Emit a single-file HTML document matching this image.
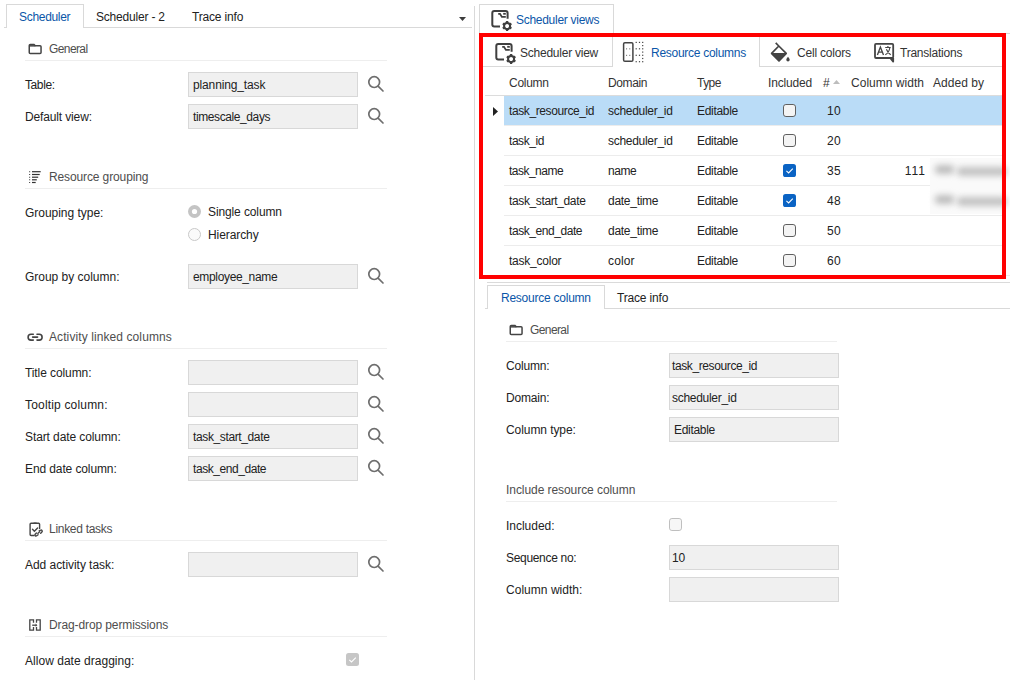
<!DOCTYPE html>
<html><head><meta charset="utf-8"><style>
html,body{margin:0;padding:0;background:#fff;}
body{width:1010px;height:680px;position:relative;overflow:hidden;font-family:"Liberation Sans",sans-serif;}
.t{position:absolute;white-space:nowrap;font-size:12px;line-height:14px;letter-spacing:-0.25px;}
.b{position:absolute;display:block;}
</style></head><body>
<div class="b" style="left:4px;top:27px;width:468px;height:1px;background:#d9d9d9"></div>
<div class="b" style="left:6px;top:4px;width:78px;height:24px;background:#fff;box-sizing:border-box;border:1px solid #d9d9d9;border-bottom:none"></div>
<div class="t " style="left:19px;top:10px;color:#0b56a8;letter-spacing:-0.305px;">Scheduler</div>
<div class="t " style="left:96px;top:10px;color:#222222;letter-spacing:-0.198px;">Scheduler - 2</div>
<div class="t " style="left:192px;top:10px;color:#222222;letter-spacing:-0.179px;">Trace info</div>
<svg class="b" style="left:458px;top:16px" width="9" height="6" viewBox="0 0 9 6"><path d="M1 1 H8 L4.5 5 Z" fill="#3c3c3c"/></svg>
<div class="b" style="left:474px;top:6px;width:1px;height:674px;background:#d9d9d9"></div>
<svg class="b" style="left:24px;top:38px" width="22" height="22" viewBox="0 0 22 22"><path d="M5.25 14.45 V7.55 a1 1 0 0 1 1 -1 H10 L11.3 7.85 H16.05 a1 1 0 0 1 1 1 V14.45 a1 1 0 0 1 -1 1 H6.25 a1 1 0 0 1 -1 -1 Z" fill="none" stroke="#444" stroke-width="1.5"/><path d="M5.25 7.85 H11.3" stroke="#444" stroke-width="1.5"/></svg>
<div class="t " style="left:49px;top:42px;color:#4e4e4e;letter-spacing:-0.598px;">General</div>
<div class="b" style="left:25px;top:60px;width:362px;height:1px;background:#eeeeee"></div>
<div class="t " style="left:25px;top:78px;color:#222222;letter-spacing:-0.404px;">Table:</div>
<div class="b" style="left:188px;top:72px;width:170px;height:25px;background:#f0f0f0;box-sizing:border-box;border:1px solid #d8d8d8"></div>
<div class="t " style="left:193px;top:78px;color:#222;letter-spacing:-0.132px;">planning_task</div>
<svg class="b" style="left:364px;top:74px" width="24" height="24" viewBox="0 0 24 24"><g fill="none" stroke="#6e6e6e" stroke-width="1.7" stroke-linecap="round"><circle cx="10.2" cy="8.1" r="5.4"/><path d="M14.3 12.3 L19 17"/></g></svg>
<div class="t " style="left:25px;top:110px;color:#222222;letter-spacing:-0.142px;">Default view:</div>
<div class="b" style="left:188px;top:104px;width:170px;height:25px;background:#f0f0f0;box-sizing:border-box;border:1px solid #d8d8d8"></div>
<div class="t " style="left:193px;top:110px;color:#222;letter-spacing:-0.401px;">timescale_days</div>
<svg class="b" style="left:364px;top:106px" width="24" height="24" viewBox="0 0 24 24"><g fill="none" stroke="#6e6e6e" stroke-width="1.7" stroke-linecap="round"><circle cx="10.2" cy="8.1" r="5.4"/><path d="M14.3 12.3 L19 17"/></g></svg>
<svg class="b" style="left:24px;top:166px" width="22" height="22" viewBox="0 0 22 22"><path d="M5 5.7 H6.2" stroke="#555" stroke-width="1.1"/><path d="M8 5.7 H16.7" stroke="#333" stroke-width="1.2"/><path d="M5 8.5 H6.2" stroke="#555" stroke-width="1.1"/><path d="M8 8.5 H15.7" stroke="#333" stroke-width="1.2"/><path d="M5 11.2 H6.2" stroke="#555" stroke-width="1.1"/><path d="M8 11.2 H14.2" stroke="#333" stroke-width="1.2"/><path d="M5 13.8 H6.2" stroke="#555" stroke-width="1.1"/><path d="M8 13.8 H12.8" stroke="#333" stroke-width="1.2"/><path d="M5 16.5 H6.2" stroke="#555" stroke-width="1.1"/><path d="M8 16.5 H11.7" stroke="#333" stroke-width="1.2"/></svg>
<div class="t " style="left:49px;top:170px;color:#4e4e4e;letter-spacing:-0.119px;">Resource grouping</div>
<div class="b" style="left:25px;top:188px;width:362px;height:1px;background:#eeeeee"></div>
<div class="t " style="left:25px;top:206px;color:#222222;letter-spacing:-0.025px;">Grouping type:</div>
<svg class="b" style="left:188px;top:205px" width="13" height="13" viewBox="0 0 13 13"><circle cx="6.5" cy="6.5" r="6.5" fill="#c4c4c4"/><circle cx="6.5" cy="6.5" r="2.6" fill="#fff"/></svg>
<div class="t " style="left:208px;top:205px;color:#222222;letter-spacing:-0.115px;">Single column</div>
<svg class="b" style="left:188px;top:228px" width="13" height="13" viewBox="0 0 13 13"><circle cx="6.5" cy="6.5" r="6" fill="#fafafa" stroke="#c8c8c8" stroke-width="1"/></svg>
<div class="t " style="left:208px;top:228px;color:#222222;letter-spacing:-0.081px;">Hierarchy</div>
<div class="t " style="left:25px;top:270px;color:#222222;letter-spacing:-0.014px;">Group by column:</div>
<div class="b" style="left:188px;top:264px;width:170px;height:25px;background:#f0f0f0;box-sizing:border-box;border:1px solid #d8d8d8"></div>
<div class="t " style="left:193px;top:270px;color:#222;letter-spacing:-0.343px;">employee_name</div>
<svg class="b" style="left:364px;top:266px" width="24" height="24" viewBox="0 0 24 24"><g fill="none" stroke="#6e6e6e" stroke-width="1.7" stroke-linecap="round"><circle cx="10.2" cy="8.1" r="5.4"/><path d="M14.3 12.3 L19 17"/></g></svg>
<svg class="b" style="left:24px;top:326px" width="22" height="22" viewBox="0 0 22 22"><g fill="none" stroke="#444" stroke-width="1.6" stroke-linecap="round"><path d="M9.3 8.3 H7 a2.9 2.9 0 0 0 0 5.8 H9.3"/><path d="M13 8.3 H15.2 a2.9 2.9 0 0 1 0 5.8 H13"/><path d="M8.6 11.1 H13.6"/></g></svg>
<div class="t " style="left:49px;top:330px;color:#4e4e4e;letter-spacing:0.093px;">Activity linked columns</div>
<div class="b" style="left:25px;top:348px;width:362px;height:1px;background:#eeeeee"></div>
<div class="t " style="left:25px;top:366px;color:#222222;letter-spacing:-0.090px;">Title column:</div>
<div class="b" style="left:188px;top:360px;width:170px;height:25px;background:#f0f0f0;box-sizing:border-box;border:1px solid #d8d8d8"></div>
<svg class="b" style="left:364px;top:362px" width="24" height="24" viewBox="0 0 24 24"><g fill="none" stroke="#6e6e6e" stroke-width="1.7" stroke-linecap="round"><circle cx="10.2" cy="8.1" r="5.4"/><path d="M14.3 12.3 L19 17"/></g></svg>
<div class="t " style="left:25px;top:398px;color:#222222;letter-spacing:0.176px;">Tooltip column:</div>
<div class="b" style="left:188px;top:392px;width:170px;height:25px;background:#f0f0f0;box-sizing:border-box;border:1px solid #d8d8d8"></div>
<svg class="b" style="left:364px;top:394px" width="24" height="24" viewBox="0 0 24 24"><g fill="none" stroke="#6e6e6e" stroke-width="1.7" stroke-linecap="round"><circle cx="10.2" cy="8.1" r="5.4"/><path d="M14.3 12.3 L19 17"/></g></svg>
<div class="t " style="left:25px;top:430px;color:#222222;letter-spacing:-0.096px;">Start date column:</div>
<div class="b" style="left:188px;top:424px;width:170px;height:25px;background:#f0f0f0;box-sizing:border-box;border:1px solid #d8d8d8"></div>
<div class="t " style="left:193px;top:430px;color:#222;letter-spacing:-0.375px;">task_start_date</div>
<svg class="b" style="left:364px;top:426px" width="24" height="24" viewBox="0 0 24 24"><g fill="none" stroke="#6e6e6e" stroke-width="1.7" stroke-linecap="round"><circle cx="10.2" cy="8.1" r="5.4"/><path d="M14.3 12.3 L19 17"/></g></svg>
<div class="t " style="left:25px;top:462px;color:#222222;letter-spacing:-0.109px;">End date column:</div>
<div class="b" style="left:188px;top:456px;width:170px;height:25px;background:#f0f0f0;box-sizing:border-box;border:1px solid #d8d8d8"></div>
<div class="t " style="left:193px;top:462px;color:#222;letter-spacing:-0.436px;">task_end_date</div>
<svg class="b" style="left:364px;top:458px" width="24" height="24" viewBox="0 0 24 24"><g fill="none" stroke="#6e6e6e" stroke-width="1.7" stroke-linecap="round"><circle cx="10.2" cy="8.1" r="5.4"/><path d="M14.3 12.3 L19 17"/></g></svg>
<svg class="b" style="left:24px;top:518px" width="22" height="22" viewBox="0 0 22 22"><g fill="none" stroke="#444" stroke-width="1.4" stroke-linecap="round"><path d="M15.6 10.5 V6.2 a1 1 0 0 0 -1 -1 H7.1 a1 1 0 0 0 -1 1 V16.5 a1 1 0 0 0 1 1 H10"/><path d="M10 5.2 H12.2"/><path d="M8.5 11.3 L10.4 13.2 L13.6 9.9"/><path d="M15.2 12.8 l1.5 -0.6 a1.1 1.1 0 0 1 1.2 1.8 l-1.2 1.2"/><path d="M14.1 16.8 l-1.4 1 a1.1 1.1 0 0 1 -1.5 -1.6 l1.2 -1.2"/><path d="M13.8 15.4 L15.6 13.8"/></g></svg>
<div class="t " style="left:49px;top:522px;color:#4e4e4e;letter-spacing:-0.291px;">Linked tasks</div>
<div class="b" style="left:25px;top:540px;width:362px;height:1px;background:#eeeeee"></div>
<div class="t " style="left:25px;top:558px;color:#222222;letter-spacing:-0.044px;">Add activity task:</div>
<div class="b" style="left:188px;top:552px;width:170px;height:25px;background:#f0f0f0;box-sizing:border-box;border:1px solid #d8d8d8"></div>
<svg class="b" style="left:364px;top:554px" width="24" height="24" viewBox="0 0 24 24"><g fill="none" stroke="#6e6e6e" stroke-width="1.7" stroke-linecap="round"><circle cx="10.2" cy="8.1" r="5.4"/><path d="M14.3 12.3 L19 17"/></g></svg>
<svg class="b" style="left:24px;top:614px" width="22" height="22" viewBox="0 0 22 22"><g fill="none" stroke="#444" stroke-width="1.3"><path d="M9.5 8.8 V5.8 H5.8 V16.1 H9.5 V13"/><path d="M12.5 8.8 V5.8 H16.2 V16.1 H12.5 V13"/><path d="M8.2 11.2 H12"/></g><path d="M11.6 9.6 L13.4 11.2 L11.6 12.8 Z" fill="#444"/></svg>
<div class="t " style="left:49px;top:618px;color:#4e4e4e;letter-spacing:-0.109px;">Drag-drop permissions</div>
<div class="b" style="left:25px;top:636px;width:362px;height:1px;background:#eeeeee"></div>
<div class="t " style="left:25px;top:654px;color:#222222;letter-spacing:0.029px;">Allow date dragging:</div>
<svg class="b" style="left:346px;top:653px" width="13" height="13" viewBox="0 0 13 13"><rect x="0" y="0" width="13" height="13" rx="2.5" fill="#c6c6c6"/><path d="M3.3 6.8 L5.5 9 L9.8 4.6" fill="none" stroke="#fff" stroke-width="1.1"/></svg>
<div class="b" style="left:479px;top:33px;width:531px;height:1px;background:#d9d9d9"></div>
<div class="b" style="left:479px;top:4px;width:135px;height:30px;background:#fff;box-sizing:border-box;border:1px solid #d9d9d9;border-bottom:none"></div>
<svg class="b" style="left:488px;top:6px" width="28" height="28" viewBox="0 0 28 28"><g fill="none" stroke="#3f3f3f" stroke-width="2" stroke-linecap="butt"><path d="M12 20.6 H6.3 a2 2 0 0 1 -2 -2 V7.1 a2 2 0 0 1 2 -2 H17.6 a2 2 0 0 1 2 2 V12.8"/></g><g fill="none" stroke="#3f3f3f" stroke-width="1.8" stroke-linejoin="miter"><path d="M10.2 7.8 H12 L13.9 10.9 H17.8"/><path d="M15.2 7.8 H17.8"/></g><g transform="translate(19.1 20)"><circle r="3.0" fill="none" stroke="#3f3f3f" stroke-width="2.1"/><rect x="-1.15" y="-4.9" width="2.3" height="2.4" rx="0.3" fill="#3f3f3f" transform="rotate(0)"/><rect x="-1.15" y="-4.9" width="2.3" height="2.4" rx="0.3" fill="#3f3f3f" transform="rotate(60)"/><rect x="-1.15" y="-4.9" width="2.3" height="2.4" rx="0.3" fill="#3f3f3f" transform="rotate(120)"/><rect x="-1.15" y="-4.9" width="2.3" height="2.4" rx="0.3" fill="#3f3f3f" transform="rotate(180)"/><rect x="-1.15" y="-4.9" width="2.3" height="2.4" rx="0.3" fill="#3f3f3f" transform="rotate(240)"/><rect x="-1.15" y="-4.9" width="2.3" height="2.4" rx="0.3" fill="#3f3f3f" transform="rotate(300)"/></g></svg>
<div class="t " style="left:516px;top:13px;color:#0b56a8;letter-spacing:-0.284px;">Scheduler views</div>
<div class="b" style="left:483px;top:66px;width:129px;height:1px;background:#d9d9d9"></div>
<div class="b" style="left:759px;top:66px;width:243px;height:1px;background:#d9d9d9"></div>
<div class="b" style="left:612px;top:37px;width:1px;height:30px;background:#d9d9d9"></div>
<div class="b" style="left:759px;top:37px;width:1px;height:30px;background:#d9d9d9"></div>
<svg class="b" style="left:492px;top:39px" width="28" height="28" viewBox="0 0 28 28"><g fill="none" stroke="#3f3f3f" stroke-width="2" stroke-linecap="butt"><path d="M12 20.6 H6.3 a2 2 0 0 1 -2 -2 V7.1 a2 2 0 0 1 2 -2 H17.6 a2 2 0 0 1 2 2 V12.8"/></g><g fill="none" stroke="#3f3f3f" stroke-width="1.8" stroke-linejoin="miter"><path d="M10.2 7.8 H12 L13.9 10.9 H17.8"/><path d="M15.2 7.8 H17.8"/></g><g transform="translate(19.1 20)"><circle r="3.0" fill="none" stroke="#3f3f3f" stroke-width="2.1"/><rect x="-1.15" y="-4.9" width="2.3" height="2.4" rx="0.3" fill="#3f3f3f" transform="rotate(0)"/><rect x="-1.15" y="-4.9" width="2.3" height="2.4" rx="0.3" fill="#3f3f3f" transform="rotate(60)"/><rect x="-1.15" y="-4.9" width="2.3" height="2.4" rx="0.3" fill="#3f3f3f" transform="rotate(120)"/><rect x="-1.15" y="-4.9" width="2.3" height="2.4" rx="0.3" fill="#3f3f3f" transform="rotate(180)"/><rect x="-1.15" y="-4.9" width="2.3" height="2.4" rx="0.3" fill="#3f3f3f" transform="rotate(240)"/><rect x="-1.15" y="-4.9" width="2.3" height="2.4" rx="0.3" fill="#3f3f3f" transform="rotate(300)"/></g></svg>
<div class="t " style="left:520px;top:46px;color:#333;letter-spacing:-0.239px;">Scheduler view</div>
<svg class="b" style="left:618px;top:38px" width="30" height="30" viewBox="0 0 30 30"><rect x="5.6" y="4.7" width="9.3" height="18.6" rx="1.3" fill="none" stroke="#444" stroke-width="1.5"/><rect x="8.0" y="10.3" width="1.1" height="1.1" fill="#777"/><rect x="8.0" y="16.8" width="1.1" height="1.1" fill="#777"/><rect x="11.2" y="10.3" width="1.1" height="1.1" fill="#777"/><rect x="11.2" y="16.8" width="1.1" height="1.1" fill="#777"/><rect x="17.599999999999998" y="3.8000000000000003" width="1.2" height="1.2" fill="#444"/><rect x="17.599999999999998" y="10.200000000000001" width="1.2" height="1.2" fill="#444"/><rect x="17.599999999999998" y="16.7" width="1.2" height="1.2" fill="#444"/><rect x="17.599999999999998" y="23.099999999999998" width="1.2" height="1.2" fill="#444"/><rect x="20.9" y="3.8000000000000003" width="1.2" height="1.2" fill="#444"/><rect x="20.9" y="10.200000000000001" width="1.2" height="1.2" fill="#444"/><rect x="20.9" y="16.7" width="1.2" height="1.2" fill="#444"/><rect x="20.9" y="23.099999999999998" width="1.2" height="1.2" fill="#444"/><rect x="24.099999999999998" y="3.8000000000000003" width="1.2" height="1.2" fill="#444"/><rect x="24.099999999999998" y="10.200000000000001" width="1.2" height="1.2" fill="#444"/><rect x="24.099999999999998" y="16.7" width="1.2" height="1.2" fill="#444"/><rect x="24.099999999999998" y="23.099999999999998" width="1.2" height="1.2" fill="#444"/><rect x="24.099999999999998" y="7.0" width="1.2" height="1.2" fill="#444"/><rect x="24.099999999999998" y="13.5" width="1.2" height="1.2" fill="#444"/><rect x="24.099999999999998" y="19.9" width="1.2" height="1.2" fill="#444"/></svg>
<div class="t " style="left:651px;top:46px;color:#0b56a8;letter-spacing:-0.279px;">Resource columns</div>
<svg class="b" style="left:766px;top:38px" width="30" height="30" viewBox="0 0 30 30"><g fill="none" stroke="#444" stroke-width="1.7" stroke-linejoin="round"><path d="M9.7 4.9 L12.8 8 L20.2 15.4 L13 22.8 L5.6 15.4 L12.8 8"/></g><path d="M5.8 15.5 H20 L13 22.5 Z" fill="#444" stroke="#444" stroke-width="1.2" stroke-linejoin="round"/><path d="M22 18.8 C23.2 20.2 23.7 21 23.7 21.8 a1.7 1.7 0 0 1 -3.4 0 C20.3 21 20.8 20.2 22 18.8 Z" fill="#444"/></svg>
<div class="t " style="left:797px;top:46px;color:#333;letter-spacing:-0.202px;">Cell colors</div>
<svg class="b" style="left:870px;top:38px" width="30" height="30" viewBox="0 0 30 30"><path d="M5 6.9 a1 1 0 0 1 1 -1 H22.2 a1 1 0 0 1 1 1 V19 a1 1 0 0 1 -1 1 H20.2 L23.2 23.6 V20" fill="none" stroke="#444" stroke-width="1.8" stroke-linejoin="round"/><path d="M20.2 20 H6 a1 1 0 0 1 -1 -1 V6.9" fill="none" stroke="#444" stroke-width="1.8"/><path d="M7.4 16.9 L10.4 9.1 L13.5 16.9 M8.6 14.1 H12.3" fill="none" stroke="#444" stroke-width="1.35"/><path d="M15.2 9.5 H20.7 M17.9 8 V9.5 M19.9 9.5 C19.3 13 17.6 15.6 15.3 16.8 M16.4 11.2 C17.3 13.6 18.8 15.6 20.7 16.8" fill="none" stroke="#444" stroke-width="1.15"/></svg>
<div class="t " style="left:900px;top:46px;color:#333;letter-spacing:-0.229px;">Translations</div>
<div class="t " style="left:509px;top:76px;color:#333;letter-spacing:-0.270px;">Column</div>
<div class="t " style="left:608px;top:76px;color:#333;letter-spacing:-0.370px;">Domain</div>
<div class="t " style="left:697px;top:76px;color:#333;letter-spacing:-0.540px;">Type</div>
<div class="t " style="left:768px;top:76px;color:#333;letter-spacing:-0.153px;">Included</div>
<div class="t " style="left:823px;top:76px;color:#333;letter-spacing:-0.250px;">#</div>
<div class="t " style="left:851px;top:76px;color:#333;letter-spacing:0.027px;">Column width</div>
<div class="t " style="left:933px;top:76px;color:#333;letter-spacing:0.041px;">Added by</div>
<svg class="b" style="left:832px;top:79px" width="9" height="6" viewBox="0 0 9 6"><path d="M1 5 L4.5 1 L8 5 Z" fill="#bdbdbd"/></svg>
<div class="b" style="left:485px;top:95px;width:517px;height:1px;background:#dcdcdc"></div>
<div class="b" style="left:504px;top:96px;width:498px;height:29px;background:#badcf7"></div>
<svg class="b" style="left:492px;top:106px" width="7" height="11" viewBox="0 0 7 11"><path d="M1 1 L6 5.5 L1 10 Z" fill="#222"/></svg>
<div class="t " style="left:509px;top:104px;color:#222;letter-spacing:-0.392px;">task_resource_id</div>
<div class="t " style="left:608px;top:104px;color:#222;letter-spacing:-0.286px;">scheduler_id</div>
<div class="t " style="left:697px;top:104px;color:#222;letter-spacing:-0.296px;">Editable</div>
<svg class="b" style="left:783px;top:104px" width="13" height="13" viewBox="0 0 13 13"><rect x="0.5" y="0.5" width="12" height="12" rx="2.4" fill="#f4f4f4" stroke="#5f5f5f" stroke-width="1"/></svg>
<div class="t" style="right:169px;top:104px;color:#222;letter-spacing:0.3px">10</div>
<div class="b" style="left:504px;top:125px;width:498px;height:1px;background:#ececec"></div>
<div class="t " style="left:509px;top:134px;color:#222;letter-spacing:-0.453px;">task_id</div>
<div class="t " style="left:608px;top:134px;color:#222;letter-spacing:-0.286px;">scheduler_id</div>
<div class="t " style="left:697px;top:134px;color:#222;letter-spacing:-0.296px;">Editable</div>
<svg class="b" style="left:783px;top:134px" width="13" height="13" viewBox="0 0 13 13"><rect x="0.5" y="0.5" width="12" height="12" rx="2.4" fill="#f4f4f4" stroke="#5f5f5f" stroke-width="1"/></svg>
<div class="t" style="right:169px;top:134px;color:#222;letter-spacing:0.3px">20</div>
<div class="b" style="left:504px;top:155px;width:498px;height:1px;background:#ececec"></div>
<div class="t " style="left:509px;top:164px;color:#222;letter-spacing:-0.513px;">task_name</div>
<div class="t " style="left:608px;top:164px;color:#222;letter-spacing:-0.473px;">name</div>
<div class="t " style="left:697px;top:164px;color:#222;letter-spacing:-0.296px;">Editable</div>
<svg class="b" style="left:783px;top:164px" width="13" height="13" viewBox="0 0 13 13"><rect x="0" y="0" width="13" height="13" rx="2.6" fill="#0a63c4"/><path d="M3.4 6.9 L5.6 9 L9.8 4.7" fill="none" stroke="#fff" stroke-width="1.1"/></svg>
<div class="t" style="right:169px;top:164px;color:#222;letter-spacing:0.3px">35</div>
<div class="t" style="right:84px;top:164px;color:#222;letter-spacing:1px">111</div>
<div class="b" style="left:504px;top:185px;width:498px;height:1px;background:#ececec"></div>
<div class="t " style="left:509px;top:194px;color:#222;letter-spacing:-0.375px;">task_start_date</div>
<div class="t " style="left:608px;top:194px;color:#222;letter-spacing:-0.275px;">date_time</div>
<div class="t " style="left:697px;top:194px;color:#222;letter-spacing:-0.296px;">Editable</div>
<svg class="b" style="left:783px;top:194px" width="13" height="13" viewBox="0 0 13 13"><rect x="0" y="0" width="13" height="13" rx="2.6" fill="#0a63c4"/><path d="M3.4 6.9 L5.6 9 L9.8 4.7" fill="none" stroke="#fff" stroke-width="1.1"/></svg>
<div class="t" style="right:169px;top:194px;color:#222;letter-spacing:0.3px">48</div>
<div class="b" style="left:504px;top:215px;width:498px;height:1px;background:#ececec"></div>
<div class="t " style="left:509px;top:224px;color:#222;letter-spacing:-0.436px;">task_end_date</div>
<div class="t " style="left:608px;top:224px;color:#222;letter-spacing:-0.275px;">date_time</div>
<div class="t " style="left:697px;top:224px;color:#222;letter-spacing:-0.296px;">Editable</div>
<svg class="b" style="left:783px;top:224px" width="13" height="13" viewBox="0 0 13 13"><rect x="0.5" y="0.5" width="12" height="12" rx="2.4" fill="#f4f4f4" stroke="#5f5f5f" stroke-width="1"/></svg>
<div class="t" style="right:169px;top:224px;color:#222;letter-spacing:0.3px">50</div>
<div class="b" style="left:504px;top:245px;width:498px;height:1px;background:#ececec"></div>
<div class="t " style="left:509px;top:254px;color:#222;letter-spacing:-0.232px;">task_color</div>
<div class="t " style="left:608px;top:254px;color:#222;letter-spacing:0.147px;">color</div>
<div class="t " style="left:697px;top:254px;color:#222;letter-spacing:-0.296px;">Editable</div>
<svg class="b" style="left:783px;top:254px" width="13" height="13" viewBox="0 0 13 13"><rect x="0.5" y="0.5" width="12" height="12" rx="2.4" fill="#f4f4f4" stroke="#5f5f5f" stroke-width="1"/></svg>
<div class="t" style="right:169px;top:254px;color:#222;letter-spacing:0.3px">60</div>
<div class="b" style="left:930px;top:158px;width:72px;height:56px;background:#fafafa"></div>
<div class="b" style="left:935px;top:165px;width:19px;height:9px;background:#bdbdbd;filter:blur(3.2px);border-radius:4px"></div>
<div class="b" style="left:957px;top:167px;width:50px;height:9px;background:#c2c2c2;filter:blur(3.3px);border-radius:4px"></div>
<div class="b" style="left:935px;top:195px;width:19px;height:9px;background:#bdbdbd;filter:blur(3.2px);border-radius:4px"></div>
<div class="b" style="left:957px;top:197px;width:50px;height:9px;background:#c2c2c2;filter:blur(3.3px);border-radius:4px"></div>
<div class="b" style="left:479px;top:33px;width:527px;height:246px;box-sizing:border-box;border:4px solid #ff0000"></div>
<div class="b" style="left:1006px;top:275px;width:4px;height:1px;background:#ececec"></div>
<div class="b" style="left:487px;top:282px;width:523px;height:1px;background:#dadada"></div>
<div class="b" style="left:485px;top:308px;width:525px;height:1px;background:#d9d9d9"></div>
<div class="b" style="left:487px;top:285px;width:118px;height:24px;background:#fff;box-sizing:border-box;border:1px solid #d9d9d9;border-bottom:none"></div>
<div class="t " style="left:501px;top:291px;color:#0b56a8;letter-spacing:-0.241px;">Resource column</div>
<div class="t " style="left:617px;top:291px;color:#222222;letter-spacing:-0.179px;">Trace info</div>
<svg class="b" style="left:505px;top:319px" width="22" height="22" viewBox="0 0 22 22"><path d="M5.25 14.45 V7.55 a1 1 0 0 1 1 -1 H10 L11.3 7.85 H16.05 a1 1 0 0 1 1 1 V14.45 a1 1 0 0 1 -1 1 H6.25 a1 1 0 0 1 -1 -1 Z" fill="none" stroke="#444" stroke-width="1.5"/><path d="M5.25 7.85 H11.3" stroke="#444" stroke-width="1.5"/></svg>
<div class="t " style="left:530px;top:323px;color:#4e4e4e;letter-spacing:-0.598px;">General</div>
<div class="b" style="left:506px;top:341px;width:331px;height:1px;background:#eeeeee"></div>
<div class="t " style="left:506px;top:359px;color:#222222;letter-spacing:-0.163px;">Column:</div>
<div class="b" style="left:669px;top:353px;width:170px;height:25px;background:#f0f0f0;box-sizing:border-box;border:1px solid #d8d8d8"></div>
<div class="t " style="left:672px;top:359px;color:#222;letter-spacing:-0.392px;">task_resource_id</div>
<div class="t " style="left:506px;top:391px;color:#222222;letter-spacing:-0.197px;">Domain:</div>
<div class="b" style="left:669px;top:385px;width:170px;height:25px;background:#f0f0f0;box-sizing:border-box;border:1px solid #d8d8d8"></div>
<div class="t " style="left:672px;top:391px;color:#222;letter-spacing:-0.286px;">scheduler_id</div>
<div class="t " style="left:506px;top:423px;color:#222222;letter-spacing:-0.073px;">Column type:</div>
<div class="b" style="left:669px;top:417px;width:170px;height:25px;background:#f0f0f0;box-sizing:border-box;border:1px solid #d8d8d8"></div>
<div class="t " style="left:674px;top:423px;color:#222;letter-spacing:-0.296px;">Editable</div>
<div class="t " style="left:506px;top:483px;color:#4e4e4e;letter-spacing:-0.065px;">Include resource column</div>
<div class="b" style="left:506px;top:501px;width:331px;height:1px;background:#eeeeee"></div>
<div class="t " style="left:506px;top:519px;color:#222222;letter-spacing:-0.013px;">Included:</div>
<svg class="b" style="left:669px;top:518px" width="13" height="13" viewBox="0 0 13 13"><rect x="0.5" y="0.5" width="12" height="12" rx="2.4" fill="#f7f7f7" stroke="#bfbfbf" stroke-width="1"/></svg>
<div class="t " style="left:506px;top:551px;color:#222222;letter-spacing:-0.315px;">Sequence no:</div>
<div class="b" style="left:669px;top:545px;width:170px;height:25px;background:#f0f0f0;box-sizing:border-box;border:1px solid #d8d8d8"></div>
<div class="t " style="left:672px;top:551px;color:#222;letter-spacing:-0.250px;">10</div>
<div class="t " style="left:506px;top:583px;color:#222222;letter-spacing:0.031px;">Column width:</div>
<div class="b" style="left:669px;top:577px;width:170px;height:25px;background:#f0f0f0;box-sizing:border-box;border:1px solid #d8d8d8"></div>
</body></html>
